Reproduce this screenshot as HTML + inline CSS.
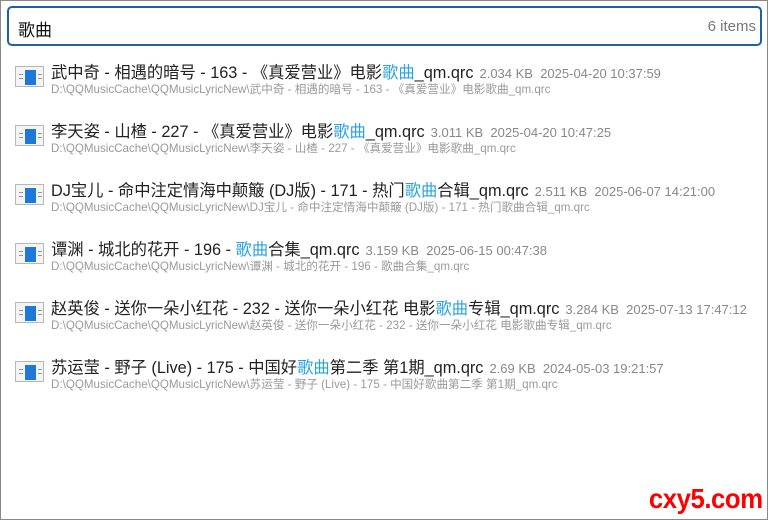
<!DOCTYPE html>
<html><head><meta charset="utf-8"><style>
body{margin:0;width:768px;height:520px;overflow:hidden;background:#fff;font-family:"Liberation Sans","Noto Sans CJK SC",sans-serif;}
.win{position:absolute;left:0;top:0;width:766px;height:518px;border:1px solid #8a8a8a;}
.search{position:absolute;left:7px;top:6px;width:751px;height:36px;border:2px solid #1f5fa8;border-radius:5px;}
.search .q{position:absolute;left:9px;top:8px;font-size:17px;color:#111;}
.search .n{position:absolute;right:4px;top:10px;font-size:15px;color:#777;}
.row{position:absolute;left:0;height:58px;width:760px;}
.ic{position:absolute;left:15px;top:4px;width:29px;height:21px;background:#f4f4f4;border:1px solid #b8b8b8;box-sizing:border-box;}
.ic .b{position:absolute;left:9px;top:3px;width:11px;height:15px;background:#1e78d8;}
.ic .l{position:absolute;height:1px;background:#999;}
.t{position:absolute;left:51px;top:-3px;font-size:16.3px;color:#222;white-space:nowrap;}
.t .h{color:#27a3dd;}
.t .m{font-size:13px;color:#888;margin-left:6px;}
.p{position:absolute;left:51px;top:19px;font-size:11.6px;color:#9a9a9a;white-space:nowrap;}
.wm{position:absolute;right:5px;bottom:5px;font-family:"Liberation Sans",sans-serif;font-weight:bold;font-size:28px;color:#ff0000;transform:scaleX(0.92);transform-origin:right;letter-spacing:-0.5px;}
</style></head><body>
<div class="win"></div>
<div class="search"><span class="q">歌曲</span><span class="n">6 items</span></div>

<div class="row" style="top:62px"><div class="ic"><div class="b"></div><div class="l" style="left:3px;top:7px;width:4px"></div><div class="l" style="left:3px;top:11px;width:4px"></div><div class="l" style="left:22px;top:7px;width:4px"></div><div class="l" style="left:22px;top:11px;width:4px"></div></div>
<div class="t">武中奇 - 相遇的暗号 - 163 - 《真爱营业》电影<span class="h">歌曲</span>_qm.qrc<span class="m">2.034 KB&nbsp;&nbsp;2025-04-20 10:37:59</span></div>
<div class="p">D:\QQMusicCache\QQMusicLyricNew\武中奇 - 相遇的暗号 - 163 - 《真爱营业》电影歌曲_qm.qrc</div></div>

<div class="row" style="top:121px"><div class="ic"><div class="b"></div><div class="l" style="left:3px;top:7px;width:4px"></div><div class="l" style="left:3px;top:11px;width:4px"></div><div class="l" style="left:22px;top:7px;width:4px"></div><div class="l" style="left:22px;top:11px;width:4px"></div></div>
<div class="t">李天姿 - 山楂 - 227 - 《真爱营业》电影<span class="h">歌曲</span>_qm.qrc<span class="m">3.011 KB&nbsp;&nbsp;2025-04-20 10:47:25</span></div>
<div class="p">D:\QQMusicCache\QQMusicLyricNew\李天姿 - 山楂 - 227 - 《真爱营业》电影歌曲_qm.qrc</div></div>

<div class="row" style="top:180px"><div class="ic"><div class="b"></div><div class="l" style="left:3px;top:7px;width:4px"></div><div class="l" style="left:3px;top:11px;width:4px"></div><div class="l" style="left:22px;top:7px;width:4px"></div><div class="l" style="left:22px;top:11px;width:4px"></div></div>
<div class="t">DJ宝儿 - 命中注定情海中颠簸 (DJ版) - 171 - 热门<span class="h">歌曲</span>合辑_qm.qrc<span class="m">2.511 KB&nbsp;&nbsp;2025-06-07 14:21:00</span></div>
<div class="p">D:\QQMusicCache\QQMusicLyricNew\DJ宝儿 - 命中注定情海中颠簸 (DJ版) - 171 - 热门歌曲合辑_qm.qrc</div></div>

<div class="row" style="top:239px"><div class="ic"><div class="b"></div><div class="l" style="left:3px;top:7px;width:4px"></div><div class="l" style="left:3px;top:11px;width:4px"></div><div class="l" style="left:22px;top:7px;width:4px"></div><div class="l" style="left:22px;top:11px;width:4px"></div></div>
<div class="t">谭渊 - 城北的花开 - 196 - <span class="h">歌曲</span>合集_qm.qrc<span class="m">3.159 KB&nbsp;&nbsp;2025-06-15 00:47:38</span></div>
<div class="p">D:\QQMusicCache\QQMusicLyricNew\谭渊 - 城北的花开 - 196 - 歌曲合集_qm.qrc</div></div>

<div class="row" style="top:298px"><div class="ic"><div class="b"></div><div class="l" style="left:3px;top:7px;width:4px"></div><div class="l" style="left:3px;top:11px;width:4px"></div><div class="l" style="left:22px;top:7px;width:4px"></div><div class="l" style="left:22px;top:11px;width:4px"></div></div>
<div class="t">赵英俊 - 送你一朵小红花 - 232 - 送你一朵小红花 电影<span class="h">歌曲</span>专辑_qm.qrc<span class="m">3.284 KB&nbsp;&nbsp;2025-07-13 17:47:12</span></div>
<div class="p">D:\QQMusicCache\QQMusicLyricNew\赵英俊 - 送你一朵小红花 - 232 - 送你一朵小红花 电影歌曲专辑_qm.qrc</div></div>

<div class="row" style="top:357px"><div class="ic"><div class="b"></div><div class="l" style="left:3px;top:7px;width:4px"></div><div class="l" style="left:3px;top:11px;width:4px"></div><div class="l" style="left:22px;top:7px;width:4px"></div><div class="l" style="left:22px;top:11px;width:4px"></div></div>
<div class="t">苏运莹 - 野子 (Live) - 175 - 中国好<span class="h">歌曲</span>第二季 第1期_qm.qrc<span class="m">2.69 KB&nbsp;&nbsp;2024-05-03 19:21:57</span></div>
<div class="p">D:\QQMusicCache\QQMusicLyricNew\苏运莹 - 野子 (Live) - 175 - 中国好歌曲第二季 第1期_qm.qrc</div></div>

<div class="wm">cxy5.com</div>
</body></html>
